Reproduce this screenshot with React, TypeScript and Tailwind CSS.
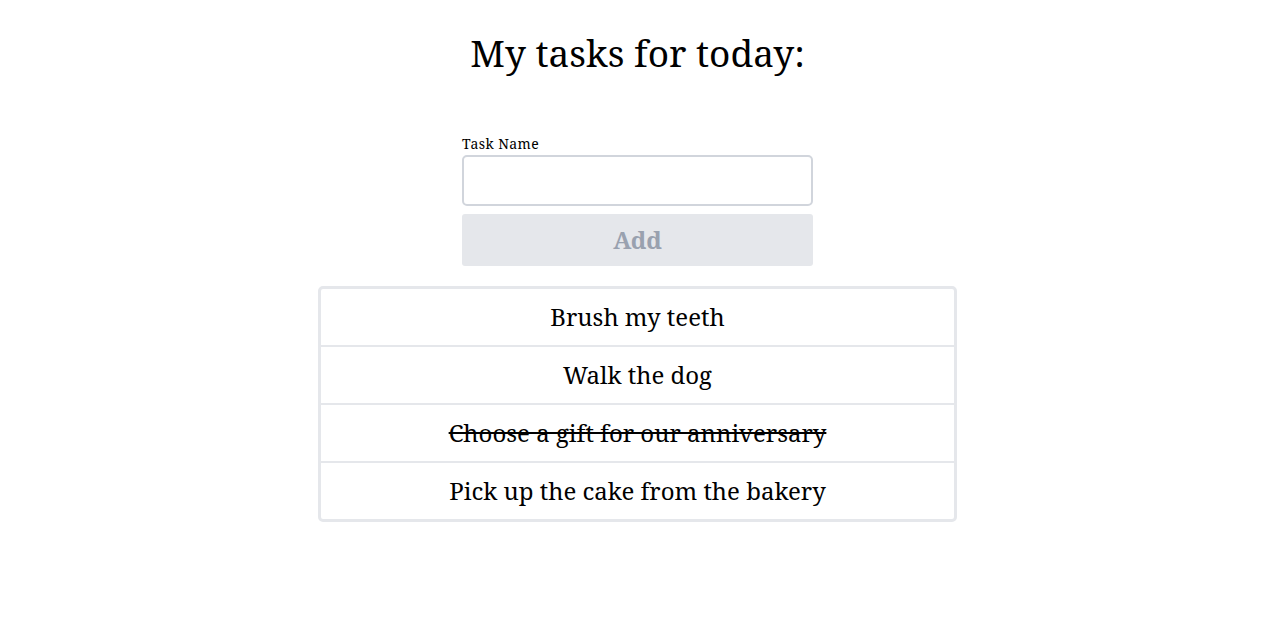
import React, { useState } from "react";

type Task = { name: string; done: boolean };

const App = () => {
  const [taskName, setTaskName] = useState("");
  const [tasks, setTasks] = useState<Task[]>([
    { name: "Brush my teeth", done: false },
    { name: "Walk the dog", done: false },
    { name: "Choose a gift for our anniversary", done: true },
    { name: "Pick up the cake from the bakery", done: false },
  ]);

  const handleSubmit = (event: React.FormEvent<HTMLFormElement>) => {
    event.preventDefault();
    if (!taskName) return;
    setTasks([...tasks, { name: taskName, done: false }]);
    setTaskName("");
  };

  const toggle = (index: number) => {
    setTasks(tasks.map((t, i) => (i === index ? { ...t, done: !t.done } : t)));
  };

  return (
    <div className="flex flex-col items-center pr-[3px] font-['Noto_Serif','DejaVu_Serif',serif] text-black">
      <h1 className="mt-[29px] text-[37px] leading-[48px]">My tasks for today:</h1>
      <form onSubmit={handleSubmit} className="mt-[58px] flex w-[351px] flex-col">
        <label className="text-[14px] leading-[18px] tracking-[0.4px]">Task Name</label>
        <input
          value={taskName}
          onChange={(e) => setTaskName(e.target.value)}
          className="mt-[2px] h-[51px] rounded-[5px] border-2 border-gray-300 px-3 text-[20px] focus:outline-none"
        />
        <button
          type="submit"
          disabled={!taskName}
          className="mt-[8px] h-[52px] rounded-[3px] bg-gray-200 text-[24px] font-bold text-gray-400"
        >
          Add
        </button>
      </form>
      <ul className="mt-[20px] w-[639px] rounded-[5px] border-[3px] border-gray-200">
        {tasks.map((task, i) => (
          <li
            key={i}
            onClick={() => toggle(i)}
            className={`flex cursor-pointer items-center justify-center text-[24px] ${
              i < tasks.length - 1 ? "h-[58px] border-b-2 border-gray-200" : "h-[56px]"
            } ${task.done ? "line-through" : ""}`}
          >
            {task.name}
          </li>
        ))}
      </ul>
    </div>
  );
};

export default App;
